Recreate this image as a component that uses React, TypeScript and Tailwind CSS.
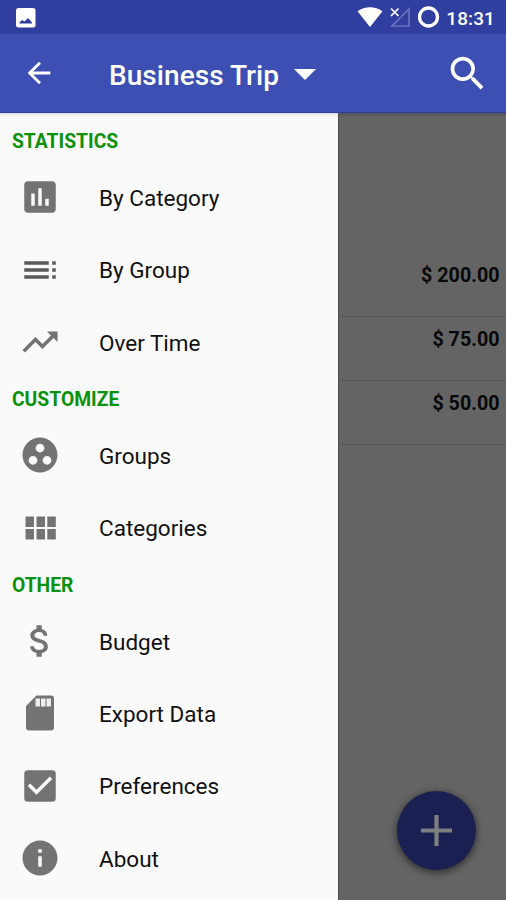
import React from 'react';
import type { ComponentType } from 'react';
import {
  MdArrowBack,
  MdAssessment,
  MdAttachMoney,
  MdCheckBox,
  MdGroupWork,
  MdInfo,
  MdSearch,
  MdToc,
  MdTrendingUp,
} from 'react-icons/md';

interface MenuItem {
  label: string;
  icon: ComponentType<{ className?: string }>;
  color?: string;
}

interface MenuSection {
  title: string;
  items: MenuItem[];
}

function GridIcon({ className }: { className?: string }) {
  return (
    <svg className={className} viewBox="0 0 42 42" fill="currentColor">
      <path d="M6.500 9.500h8.500v10.500H6.500zM17.500 9.500h8.500v10.500h-8.500zM28.300 9.500h8.500v10.500h-8.500zM6.500 22h8.500v10.500H6.500zM17.500 22h8.500v10.500h-8.500zM28.300 22h8.500v10.500h-8.500z" />
    </svg>
  );
}

function SdCardIcon({ className }: { className?: string }) {
  return (
    <svg className={className} viewBox="0 0 42 42">
      <path
        d="M17.500 3.500H32a3 3 0 0 1 3 3v29a3 3 0 0 1-3 3H10a3 3 0 0 1-3-3V14z"
        fill="currentColor"
      />
      <path d="M16.500 6.500h4.500v8h-4.500zM22 6.500h4.500v8H22zM27.500 6.500H32v8h-4.500z" fill="#ededed" />
    </svg>
  );
}

const sections: MenuSection[] = [
  {
    title: 'STATISTICS',
    items: [
      { label: 'By Category', icon: MdAssessment },
      { label: 'By Group', icon: MdToc, color: 'text-[#5a5a5a]' },
      { label: 'Over Time', icon: MdTrendingUp },
    ],
  },
  {
    title: 'CUSTOMIZE',
    items: [
      { label: 'Groups', icon: MdGroupWork },
      { label: 'Categories', icon: GridIcon },
    ],
  },
  {
    title: 'OTHER',
    items: [
      { label: 'Budget', icon: MdAttachMoney },
      { label: 'Export Data', icon: SdCardIcon },
      { label: 'Preferences', icon: MdCheckBox },
      { label: 'About', icon: MdInfo },
    ],
  },
];

const amounts = ['$ 200.00', '$ 75.00', '$ 50.00'];

function StatusBar() {
  return (
    <div className="flex h-[34px] items-center bg-[#303f9f] pl-4 pr-[11px] text-white">
      <svg className="mt-px h-5 w-5" viewBox="0 0 20 20">
        <rect width="19.5" height="19.5" rx="2.5" fill="currentColor" />
        <path d="M3.500 15.500v-1l2.500-2.500 2.500 1.500 3.500-3.500 4 4.500v1z" fill="#303f9f" />
      </svg>
      <div className="ml-auto flex items-center">
        <svg className="h-5 w-[26px]" viewBox="0 0 26 20">
          <path d="M0.5 4.2C8-1 18-1 25.500 4.200L13 20z" fill="currentColor" />
        </svg>
        <svg className="ml-[7px] h-5 w-5" viewBox="0 0 20 20" fill="none">
          <path d="M19 2v17H2z" stroke="#6873bb" strokeWidth="1.7" />
          <path d="M0 0h10.500v10H0z" fill="#303f9f" />
          <path d="M1 1.500l7.500 7.500M8.500 1.500L1 9" stroke="currentColor" strokeWidth="1.700" />
        </svg>
        <svg className="ml-2 h-[22px] w-[22px]" viewBox="0 0 22 22" fill="none">
          <circle cx="10.500" cy="11" r="9" stroke="currentColor" strokeWidth="3.400" />
        </svg>
        <span className="ml-[6px] mt-[2px] text-[19px] font-medium leading-none tracking-[0.1px]">18:31</span>
      </div>
    </div>
  );
}

function Toolbar() {
  return (
    <header className="flex h-[79px] items-center border-b border-[#2a3b9c] bg-[#3d4fb3] pl-[22px] pr-4 text-white">
      <MdArrowBack className="h-[34px] w-[34px]" />
      <h1 className="ml-[53px] mt-[6px] text-[28px] font-medium leading-none tracking-[0.05px]">Business Trip</h1>
      <svg className="ml-[15px] mt-[2px] h-[11px] w-[22px]" viewBox="0 0 22 11">
        <path d="M0 0h22L11 11z" fill="currentColor" />
      </svg>
      <MdSearch className="ml-auto h-[45px] w-[45px]" />
    </header>
  );
}

function Drawer() {
  return (
    <nav className="w-[338px] shrink-0 bg-[#fafafa] bg-linear-to-b from-[#e2e2e2] to-[#fafafa] to-[4px] pt-[7.500px]">
      {sections.map((section) => (
        <section key={section.title}>
          <h2 className="flex h-[41.200px] items-center pl-3 pt-[3px] text-[19.300px] font-bold text-[#0b910b]">
            {section.title}
          </h2>
          {section.items.map(({ label, icon: Icon, color = 'text-[#737373]' }) => (
            <div key={label} className="flex h-[72.300px] items-center pl-[19px]">
              <Icon className={`-mt-px h-[42px] w-[42px] ${color}`} />
              <span className="ml-[38px] mt-[2px] text-[22.500px] text-[#111]">{label}</span>
            </div>
          ))}
        </section>
      ))}
    </nav>
  );
}

function Expenses() {
  return (
    <main className="relative flex-1 border-l border-[#505050] bg-[#646464] bg-linear-to-b from-[#525252] to-[#646464] to-[4px] pt-[140px]">
      {amounts.map((amount) => (
        <div
          key={amount}
          className="flex h-16 items-start justify-end border-b border-[#575757] pr-[6.500px] pt-[11px] text-[19.700px] font-bold leading-6 text-[#080808]"
        >
          {amount}
        </div>
      ))}
      <button className="absolute bottom-[30px] right-[30px] flex h-[79px] w-[79px] items-center justify-center rounded-full bg-[#1a2052] shadow-[0_2px_7px_1px_rgba(0,0,0,0.5)]">
        <svg className="h-[31px] w-[31px]" viewBox="0 0 31 31">
          <path d="M15.500 0v31M0 15.500h31" stroke="#7d7f80" strokeWidth="4.200" />
        </svg>
      </button>
    </main>
  );
}

export default function App() {
  return (
    <div className="flex h-[900px] w-[506px] flex-col overflow-hidden font-[Roboto,sans-serif]">
      <StatusBar />
      <Toolbar />
      <div className="flex min-h-0 flex-1">
        <Drawer />
        <Expenses />
      </div>
    </div>
  );
}
